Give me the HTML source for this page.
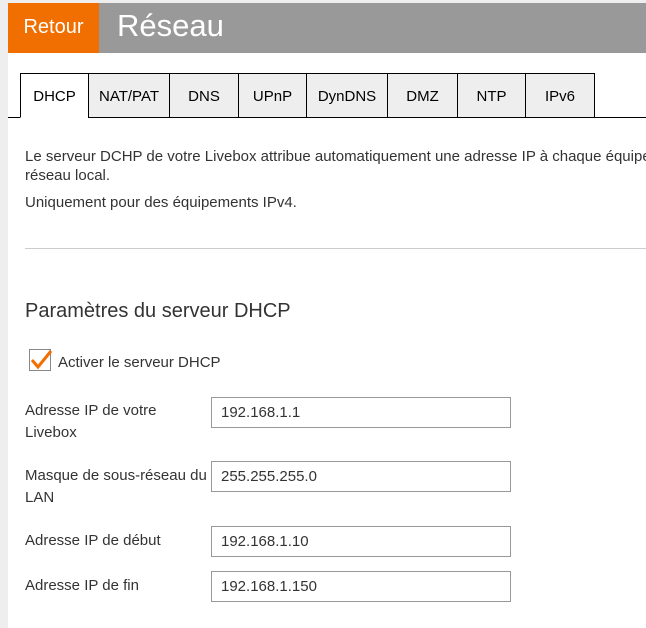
<!DOCTYPE html>
<html><head><meta charset="utf-8"><style>
*{margin:0;padding:0;box-sizing:border-box}
html,body{width:646px;height:628px;overflow:hidden}
body{background:#fff;font-family:"Liberation Sans",Arial,sans-serif;color:#333;position:relative}
.abs{position:absolute}
.tab{position:absolute;top:73px;height:45px;border:1px solid #000;background:#eee;font-size:15px;color:#000;text-align:center;line-height:46px}
.lbl{position:absolute;left:25px;font-size:15px;line-height:22px;color:#333}
.inp{position:absolute;left:211px;width:300px;height:31px;border:1px solid #999;font-size:15px;line-height:29px;padding-left:9px;color:#333}
</style></head><body>
<div class="abs" style="left:0;top:0;width:8px;height:628px;background:#eee"></div>
<div class="abs" style="left:0;top:0;width:646px;height:3px;background:#eee"></div>
<div class="abs" style="left:8px;top:3px;width:638px;height:50px;background:#999"></div>
<div class="abs" style="left:8px;top:3px;width:91px;height:50px;background:#f16e00;color:#fff;font-size:20px;line-height:48px;text-align:center">Retour</div>
<div class="abs" style="left:117px;top:3px;color:#fff;font-size:31px;line-height:46px">Réseau</div>
<div class="abs" style="left:8px;top:117px;width:638px;height:1px;background:#000"></div>
<div class="tab" style="left:20px;width:69px;background:#fff;border-bottom-color:#fff">DHCP</div>
<div class="tab" style="left:88px;width:82px">NAT/PAT</div>
<div class="tab" style="left:169px;width:70px">DNS</div>
<div class="tab" style="left:238px;width:69px">UPnP</div>
<div class="tab" style="left:306px;width:82px">DynDNS</div>
<div class="tab" style="left:387px;width:71px">DMZ</div>
<div class="tab" style="left:457px;width:69px">NTP</div>
<div class="tab" style="left:525px;width:70px">IPv6</div>
<div class="abs" style="left:25px;top:147px;width:621px;overflow:hidden;font-size:15px;line-height:19px;white-space:nowrap">Le serveur DCHP de votre Livebox attribue automatiquement une adresse IP à chaque équipement du<br>réseau local.</div>
<div class="abs" style="left:25px;top:193px;font-size:15px;line-height:19px">Uniquement pour des équipements IPv4.</div>
<div class="abs" style="left:25px;top:248px;width:621px;height:1px;background:#ccc"></div>
<div class="abs" style="left:25px;top:298px;font-size:20px;line-height:27px">Paramètres du serveur DHCP</div>
<div class="abs" style="left:29px;top:349px;width:22px;height:22px;border:1px solid #888"></div>
<svg class="abs" style="left:29px;top:346px" width="26" height="26"><path d="M3 14 L9 21 L22 5" stroke="#f16e00" stroke-width="3" fill="none"/></svg>
<div class="abs" style="left:58px;top:353px;font-size:15px;line-height:20px">Activer le serveur DHCP</div>
<div class="lbl" style="top:400px">Adresse IP de votre<br>Livebox</div>
<div class="inp" style="top:397px">192.168.1.1</div>
<div class="lbl" style="top:465px">Masque de sous-réseau du<br>LAN</div>
<div class="inp" style="top:461px">255.255.255.0</div>
<div class="lbl" style="top:530px">Adresse IP de début</div>
<div class="inp" style="top:526px">192.168.1.10</div>
<div class="lbl" style="top:575px">Adresse IP de fin</div>
<div class="inp" style="top:571px">192.168.1.150</div>
</body></html>
